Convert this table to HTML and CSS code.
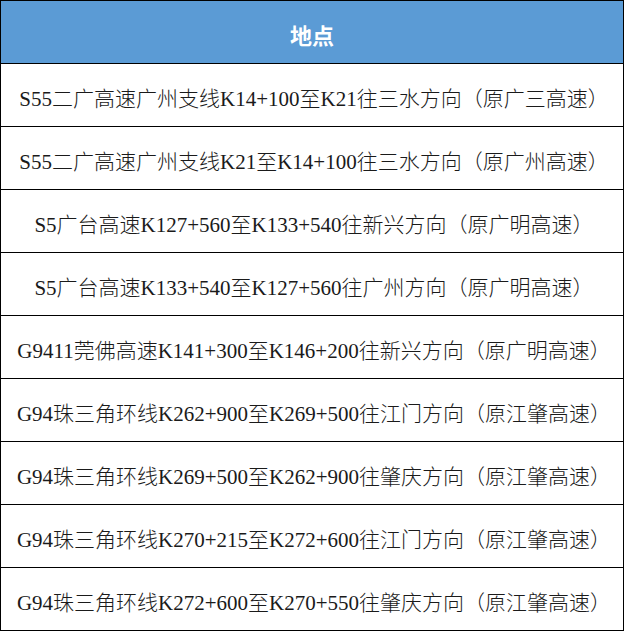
FILE: index.html
```html
<!DOCTYPE html>
<html lang="zh-CN">
<head>
<meta charset="utf-8">
<title>地点</title>
<link rel="stylesheet" href="styles.css">
</head>
<body>
<div class="table">
  <div class="head">地点</div>
  <div class="row">S55二广高速广州支线K14+100至K21往三水方向（原广三高速）</div>
  <div class="row">S55二广高速广州支线K21至K14+100往三水方向（原广州高速）</div>
  <div class="row">S5广台高速K127+560至K133+540往新兴方向（原广明高速）</div>
  <div class="row">S5广台高速K133+540至K127+560往广州方向（原广明高速）</div>
  <div class="row">G9411莞佛高速K141+300至K146+200往新兴方向（原广明高速）</div>
  <div class="row">G94珠三角环线K262+900至K269+500往江门方向（原江肇高速）</div>
  <div class="row">G94珠三角环线K269+500至K262+900往肇庆方向（原江肇高速）</div>
  <div class="row">G94珠三角环线K270+215至K272+600往江门方向（原江肇高速）</div>
  <div class="row">G94珠三角环线K272+600至K270+550往肇庆方向（原江肇高速）</div>
</div>
</body>
</html>
```
FILE: styles.css
```css
html, body {
  margin: 0;
  padding: 0;
  background: #ffffff;
}
.table {
  width: 624px;
  box-sizing: border-box;
  border: 1px solid #000;
  display: flex;
  flex-direction: column;
}
.head {
  height: 62px;
  background: #5b9bd5;
  color: #ffffff;
  font-family: "Noto Sans CJK SC", sans-serif;
  font-weight: 700;
  font-size: 22px;
  display: flex;
  align-items: center;
  justify-content: center;
  padding-top: 4px;
  box-sizing: border-box;
}
.row {
  height: 63px;
  box-sizing: border-box;
  border-top: 1px solid #000;
  display: flex;
  align-items: center;
  justify-content: center;
  padding-top: 4px;
  padding-left: 4px;
  font-family: "Liberation Serif", "Noto Sans CJK SC", serif;
  font-size: 21px;
  font-weight: 300;
  color: #1a1a1a;
  white-space: nowrap;
}
```
